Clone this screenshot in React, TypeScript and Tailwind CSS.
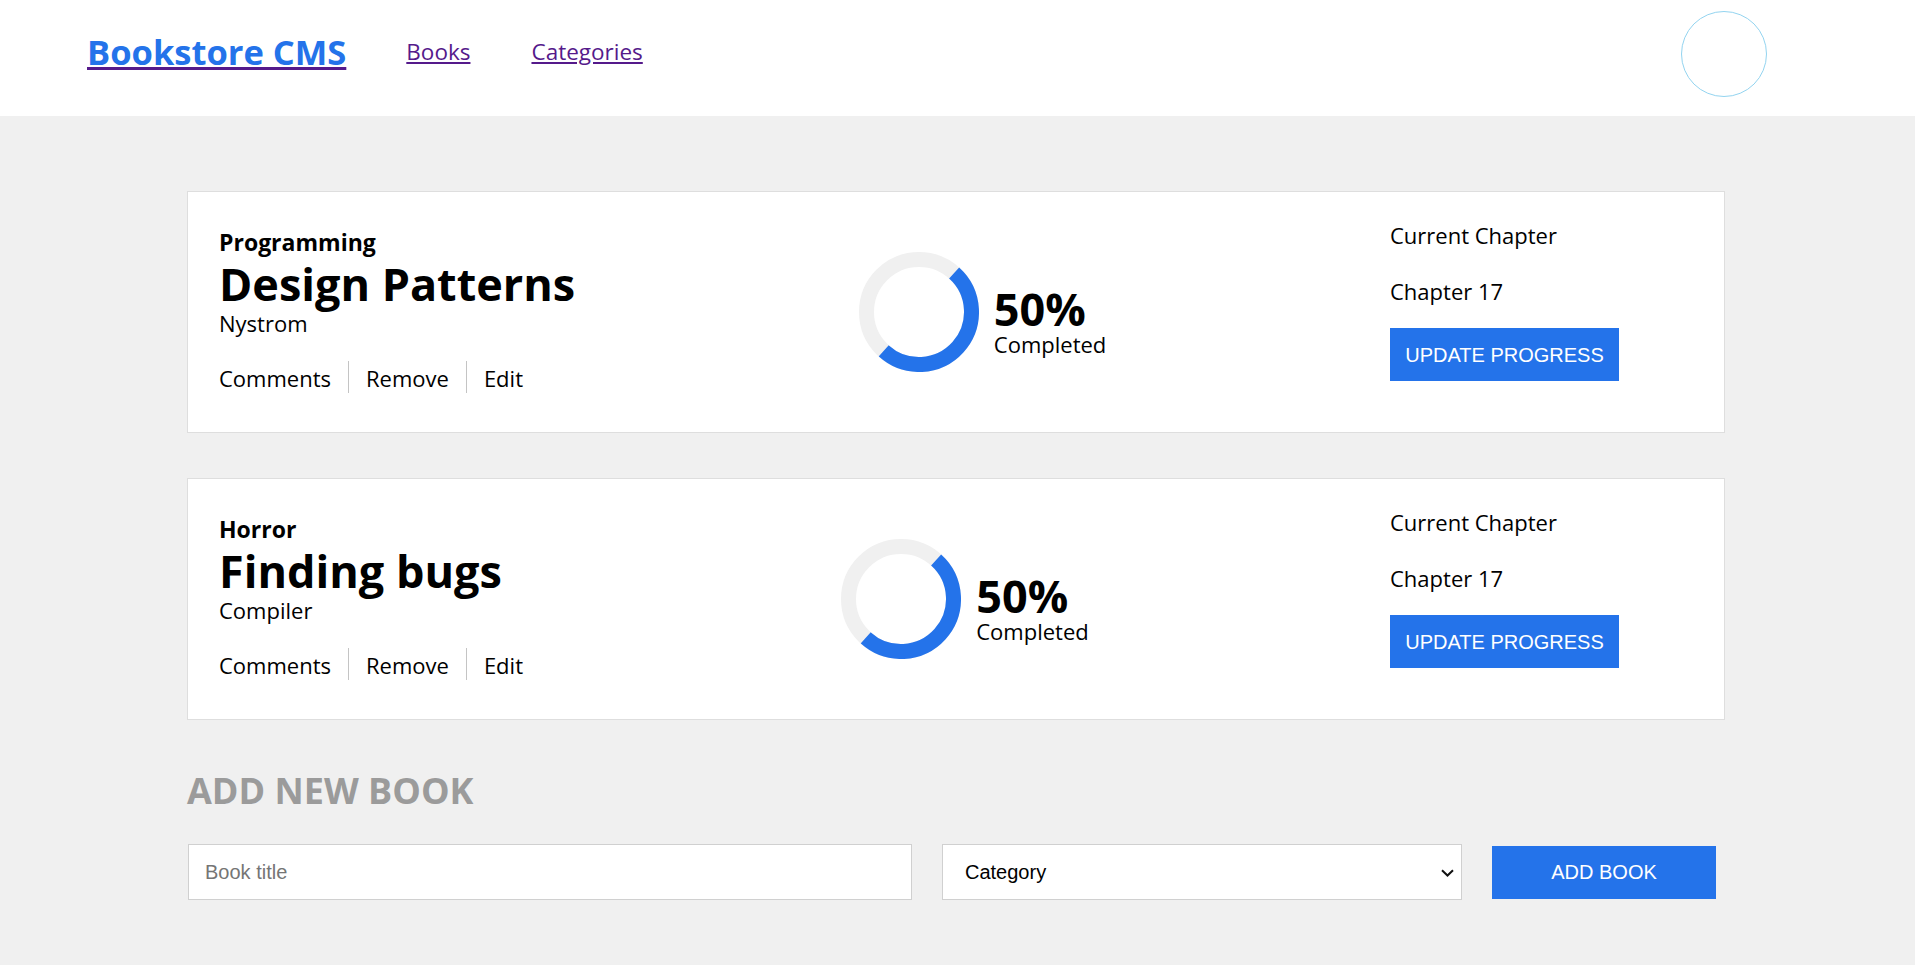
import { useState } from 'react'

interface Book {
  id: number
  category: string
  title: string
  author: string
  percent: number
  chapter: string
}

const books: Book[] = [
  { id: 1, category: 'Programming', title: 'Design Patterns', author: 'Nystrom', percent: 50, chapter: 'Chapter 17' },
  { id: 2, category: 'Horror', title: 'Finding bugs', author: 'Compiler', percent: 50, chapter: 'Chapter 17' },
]

function ProgressRing({ percent }: { percent: number }) {
  const r = 52.5
  const c = 2 * Math.PI * r
  return (
    <svg width="120" height="120" viewBox="0 0 120 120" className="shrink-0">
      <circle cx="60" cy="60" r={r} fill="none" stroke="#f0f0f0" strokeWidth="15" />
      <circle
        cx="60"
        cy="60"
        r={r}
        fill="none"
        stroke="#2473ea"
        strokeWidth="15"
        strokeDasharray={`${(c * percent) / 100} ${c}`}
        transform="rotate(-48 60 60)"
      />
    </svg>
  )
}

function BookCard({ book }: { book: Book }) {
  return (
    <div className="flex h-[242px] items-center border border-[#dedede] bg-white pl-[31px] pr-[105px]">
      {/* left: info + actions */}
      <div className="flex flex-col pb-[4px]">
        <span className="text-[23px] leading-[30px] font-bold text-black">{book.category}</span>
        <h2 className="text-[45px] leading-[54px] font-bold text-black">{book.title}</h2>
        <span className="text-[22px] leading-[25px] text-black">{book.author}</span>
        <div className="mt-[25px] flex h-[32px] items-center text-[22px] text-black">
          <button className="h-full pr-[17px] pt-[2px] border-r border-[#c4c4c4] leading-[30px]">Comments</button>
          <button className="h-full px-[17px] pt-[2px] border-r border-[#c4c4c4] leading-[30px]">Remove</button>
          <button className="h-full px-[17px] pt-[2px] leading-[30px]">Edit</button>
        </div>
      </div>

      {/* middle: progress */}
      <div className="flex flex-1 items-center justify-center">
        <ProgressRing percent={book.percent} />
        <div className="ml-[15px] mt-[21px] flex flex-col">
          <span className="text-[45px] leading-[42px] font-bold text-black">{book.percent}%</span>
          <span className="text-[22px] leading-[28px] text-black">Completed</span>
        </div>
      </div>

      {/* right: chapter */}
      <div className="flex w-[229px] flex-col self-start pt-[28px]">
        <span className="text-[22px] leading-[30px] text-black">Current Chapter</span>
        <span className="mt-[26px] text-[22px] leading-[30px] text-black">{book.chapter}</span>
        <button className="mt-[22px] h-[53px] w-[229px] bg-[#2473ea] font-['Liberation_Sans',Arial,sans-serif] text-[20px] text-white">
          UPDATE PROGRESS
        </button>
      </div>
    </div>
  )
}

export default function App() {
  const [title, setTitle] = useState('')
  const [category, setCategory] = useState('')

  return (
    <div className="min-h-screen bg-[#f0f0f0] font-['Open_Sans',sans-serif]">
      <header className="flex h-[116px] items-center justify-between bg-white pl-[87px] pr-[148px]">
        <div className="mb-[12px] flex items-center gap-[60px]">
          <a href="#" className="text-[34.5px] leading-[40px] font-bold text-[#2473ea] underline decoration-[#551a8b]">
            Bookstore CMS
          </a>
          <nav className="flex items-center gap-[61px]">
            <a href="#" className="text-[22.5px] leading-[30px] text-[#551a8b] underline">Books</a>
            <a href="#" className="text-[22.5px] leading-[30px] text-[#551a8b] underline">Categories</a>
          </nav>
        </div>
        <div className="mb-[8px] h-[86px] w-[86px] rounded-full border border-[#93d4f0] bg-white" />
      </header>

      <main className="ml-[187px] w-[1538px] pt-[75px]">
        <div className="flex flex-col gap-[45px]">
          {books.map((b) => (
            <BookCard key={b.id} book={b} />
          ))}
        </div>

        <h3 className="mt-[51px] text-[36px] leading-[40px] font-bold text-[#9b9b9b]">ADD NEW BOOK</h3>

        <form
          className="mt-[33px] flex items-center gap-[30px] font-['Liberation_Sans',Arial,sans-serif]"
          onSubmit={(e) => e.preventDefault()}
        >
          <input
            type="text"
            value={title}
            onChange={(e) => setTitle(e.target.value)}
            placeholder="Book title"
            className="ml-[1px] h-[56px] w-[724px] border border-[#d0d0d0] bg-white px-[16px] text-[20px] text-black placeholder:text-[#757575] outline-none"
          />
          <div className="relative h-[56px] w-[520px]">
            <select
              value={category}
              onChange={(e) => setCategory(e.target.value)}
              className="h-full w-full appearance-none border border-[#d0d0d0] bg-white pl-[22px] text-[20px] text-black outline-none"
            >
              <option value="">Category</option>
              <option value="programming">Programming</option>
              <option value="horror">Horror</option>
            </select>
            <svg
              width="13"
              height="8"
              viewBox="0 0 13 8"
              className="pointer-events-none absolute right-[8px] top-[25px]"
            >
              <path d="M1 1.2 L6.5 6.5 L12 1.2" fill="none" stroke="#111" strokeWidth="2" />
            </svg>
          </div>
          <button type="submit" className="h-[53px] w-[224px] bg-[#2473ea] text-[20px] text-white">
            ADD BOOK
          </button>
        </form>
      </main>
    </div>
  )
}
